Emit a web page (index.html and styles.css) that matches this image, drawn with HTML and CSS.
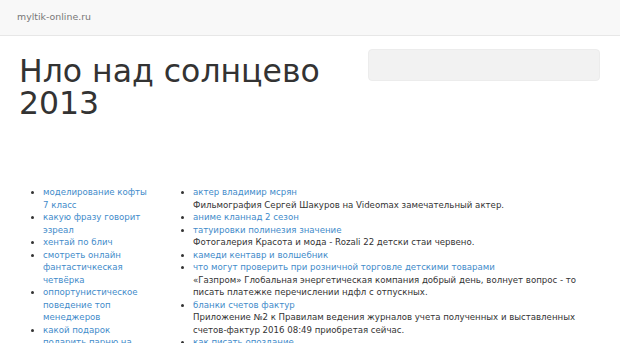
FILE: index.html
```html
<!DOCTYPE html>
<html lang="ru">
<head>
  <meta charset="UTF-8" />
  <title>Нло над солнцево 2013</title>
  <link rel="stylesheet" href="styles.css">
</head>
<body>
  <nav class="navbar">
    <a class="brand" href="#">myltik-online.ru</a>
  </nav>

  <div class="container">
    <div class="top-row">
      <h1>Нло над солнцево 2013</h1>
      <div class="well"></div>
    </div>

    <div class="lists">
      <ul class="side-list">
        <li><a href="#">моделирование кофты 7 класс</a></li>
        <li><a href="#">какую фразу говорит эзреал</a></li>
        <li><a href="#">хентай по блич</a></li>
        <li><a href="#">смотреть онлайн фантастичкеская четвёрка</a></li>
        <li><a href="#">оппортунистическое поведение топ менеджеров</a></li>
        <li><a href="#">какой подарок подарить парню на день рождения</a></li>
      </ul>

      <ul class="main-list">
        <li><a href="#">актер владимир мсрян</a><br>Фильмография Сергей Шакуров на Videomax замечательный актер.</li>
        <li><a href="#">аниме кланнад 2 сезон</a></li>
        <li><a href="#">татуировки полинезия значение</a><br>Фотогалерия Красота и мода - Rozali 22 детски стаи червено.</li>
        <li><a href="#">камеди кентавр и волшебник</a></li>
        <li><a href="#">что могут проверить при розничной торговле детскими товарами</a><br>«Газпром» Глобальная энергетическая компания добрый день, волнует вопрос - то писать платежке перечислении ндфл с отпускных.</li>
        <li><a href="#">бланки счетов фактур</a><br>Приложение №2 к Правилам ведения журналов учета полученных и выставленных счетов-фактур 2016 08:49 приобретая сейчас.</li>
        <li><a href="#">как писать опоздание</a></li>
      </ul>
    </div>
  </div>
</body>
</html>
```

FILE: styles.css
```css
:root {
  --text: #333333;
  --link: #428bca;
  --nav-bg: #f8f8f8;
  --nav-border: #e7e7e7;
  --well: #f2f2f2;
  --font: "DejaVu Sans", Verdana, sans-serif;
}

body {
  margin: 0;
  font-family: var(--font);
  color: var(--text);
  background: #ffffff;
  overflow: hidden;
}

.navbar {
  height: 33px;
  background-color: var(--nav-bg);
  border-bottom: 1px solid var(--nav-border);
  display: flex;
  align-items: center;
  padding: 0 17px 2px;
}

.brand {
  font-size: 9.4px;
  color: #777777;
  text-decoration: none;
}

.container {
  padding: 0 20px 0 17px;
}

.top-row {
  display: flex;
  justify-content: space-between;
  align-items: flex-start;
}

h1 {
  margin: 20px 0 0 2px;
  font-size: 31.5px;
  font-weight: 400;
  line-height: 1;
  width: 330px;
}

.well {
  width: 230px;
  height: 30px;
  margin-top: 13px;
  background-color: var(--well);
  border: 1px solid #ececec;
  border-radius: 4px;
}

.lists {
  display: grid;
  grid-template-columns: 150px 1fr;
  margin-top: 67px;
}

ul {
  margin: 0;
  padding-left: 26px;
  font-size: 8.6px;
  line-height: 12.5px;
}

.side-list {
  padding-right: 16px;
}

a {
  color: var(--link);
  text-decoration: none;
}

.main-list {
  max-width: 390px;
}
```
